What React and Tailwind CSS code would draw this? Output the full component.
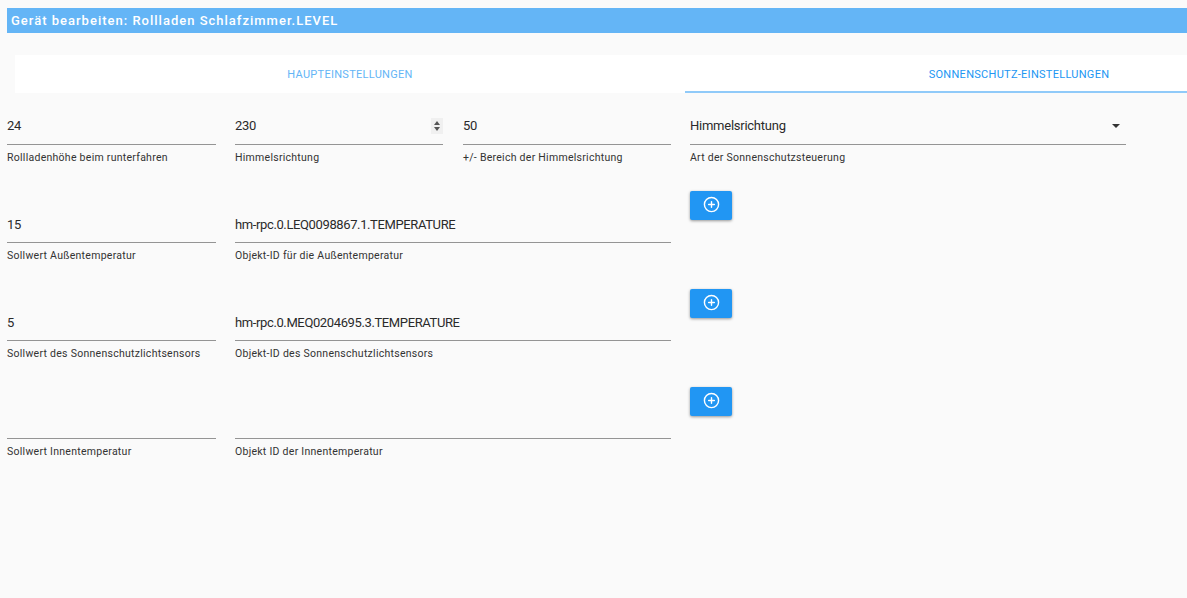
import React from "react";
import { CirclePlus } from "lucide-react";

const Field = ({ value, label, className = "w-[209px]", valueClass = "pt-[1px]", spinner, caret }) => (
  <div className={className}>
    <div className={`h-[39px] flex items-center justify-between border-b border-[#949494] text-[13px] tracking-[-0.25px] text-[#2a2a2a] ${valueClass}`}>
      <span className={value ? "" : "invisible"}>{value || "-"}</span>
      {spinner && (
        <span className="flex flex-col items-center justify-center gap-[2px] w-[12px] h-[16px] bg-[#f0f0f0]">
          <span className="w-0 h-0 border-x-[3px] border-x-transparent border-b-[4px] border-b-[#555]"></span>
          <span className="w-0 h-0 border-x-[3px] border-x-transparent border-t-[4px] border-t-[#555]"></span>
        </span>
      )}
      {caret && (
        <span className="w-0 h-0 mr-[6px] border-x-[4px] border-x-transparent border-t-[4px] border-t-[#333]"></span>
      )}
    </div>
    <div className="mt-[6px] text-[10.5px] leading-[14px] tracking-[0.27px] text-[#333]">{label}</div>
  </div>
);

const AddButton = () => (
  <button className="w-[42px] h-[29px] rounded-[2px] bg-[#2196f3] text-white flex items-center justify-center pb-[2px] shadow-[0_1px_3px_rgba(0,0,0,0.4)]">
    <CirclePlus size={17} strokeWidth={2} />
  </button>
);

const rows = [
  [
    { value: "15", label: "Sollwert Außentemperatur" },
    { value: "hm-rpc.0.LEQ0098867.1.TEMPERATURE", label: "Objekt-ID für die Außentemperatur" },
  ],
  [
    { value: "5", label: "Sollwert des Sonnenschutzlichtsensors" },
    { value: "hm-rpc.0.MEQ0204695.3.TEMPERATURE", label: "Objekt-ID des Sonnenschutzlichtsensors" },
  ],
  [
    { value: "", label: "Sollwert Innentemperatur" },
    { value: "", label: "Objekt ID der Innentemperatur" },
  ],
];

export default function App() {
  return (
    <div className="w-[1187px] h-[598px] overflow-hidden bg-[#fafafa] pt-[8px] font-['Roboto',sans-serif]">
      <div className="ml-[7px] h-[25px] bg-[#64b5f6] pl-[4px] flex items-center text-[13px] font-medium tracking-[1px] text-white">
        Gerät bearbeiten: Rollladen Schlafzimmer.LEVEL
      </div>

      <div className="mt-[22px] ml-[15px] h-[38px] flex overflow-hidden bg-white text-[11px] tracking-[0.28px]">
        <div className="w-[670px] shrink-0 flex items-center justify-center pt-[2px] text-[#64b5f6]">HAUPTEINSTELLUNGEN</div>
        <div className="w-[668px] shrink-0 flex items-center justify-center pt-[4px] text-[#2196f3] border-b-2 border-[#90caf9]">
          SONNENSCHUTZ-EINSTELLUNGEN
        </div>
      </div>

      <div className="mt-[13px] ml-[7px] flex">
        <div className="w-[664px] flex flex-col gap-[59px]">
          <div className="flex gap-[19px] h-[39px]">
            <Field value="24" label="Rollladenhöhe beim runterfahren" />
            <Field value="230" label="Himmelsrichtung" className="w-[208px]" spinner />
            <Field value="50" label="+/- Bereich der Himmelsrichtung" className="w-[208px] ml-[1px]" />
          </div>
          {rows.map((row, i) => (
            <div key={i} className="flex gap-[19px] h-[39px]">
              <Field {...row[0]} valueClass="pt-[3px]" />
              <Field {...row[1]} className="w-[436px]" valueClass="pt-[3px] tracking-[-0.38px]" />
            </div>
          ))}
        </div>

        <div className="ml-[19px] w-[436px]">
          <Field value="Himmelsrichtung" label="Art der Sonnenschutzsteuerung" className="w-[436px]" caret />
          <div className="mt-[26px] flex flex-col gap-[69px]">
            <AddButton />
            <AddButton />
            <AddButton />
          </div>
        </div>
      </div>
    </div>
  );
}
